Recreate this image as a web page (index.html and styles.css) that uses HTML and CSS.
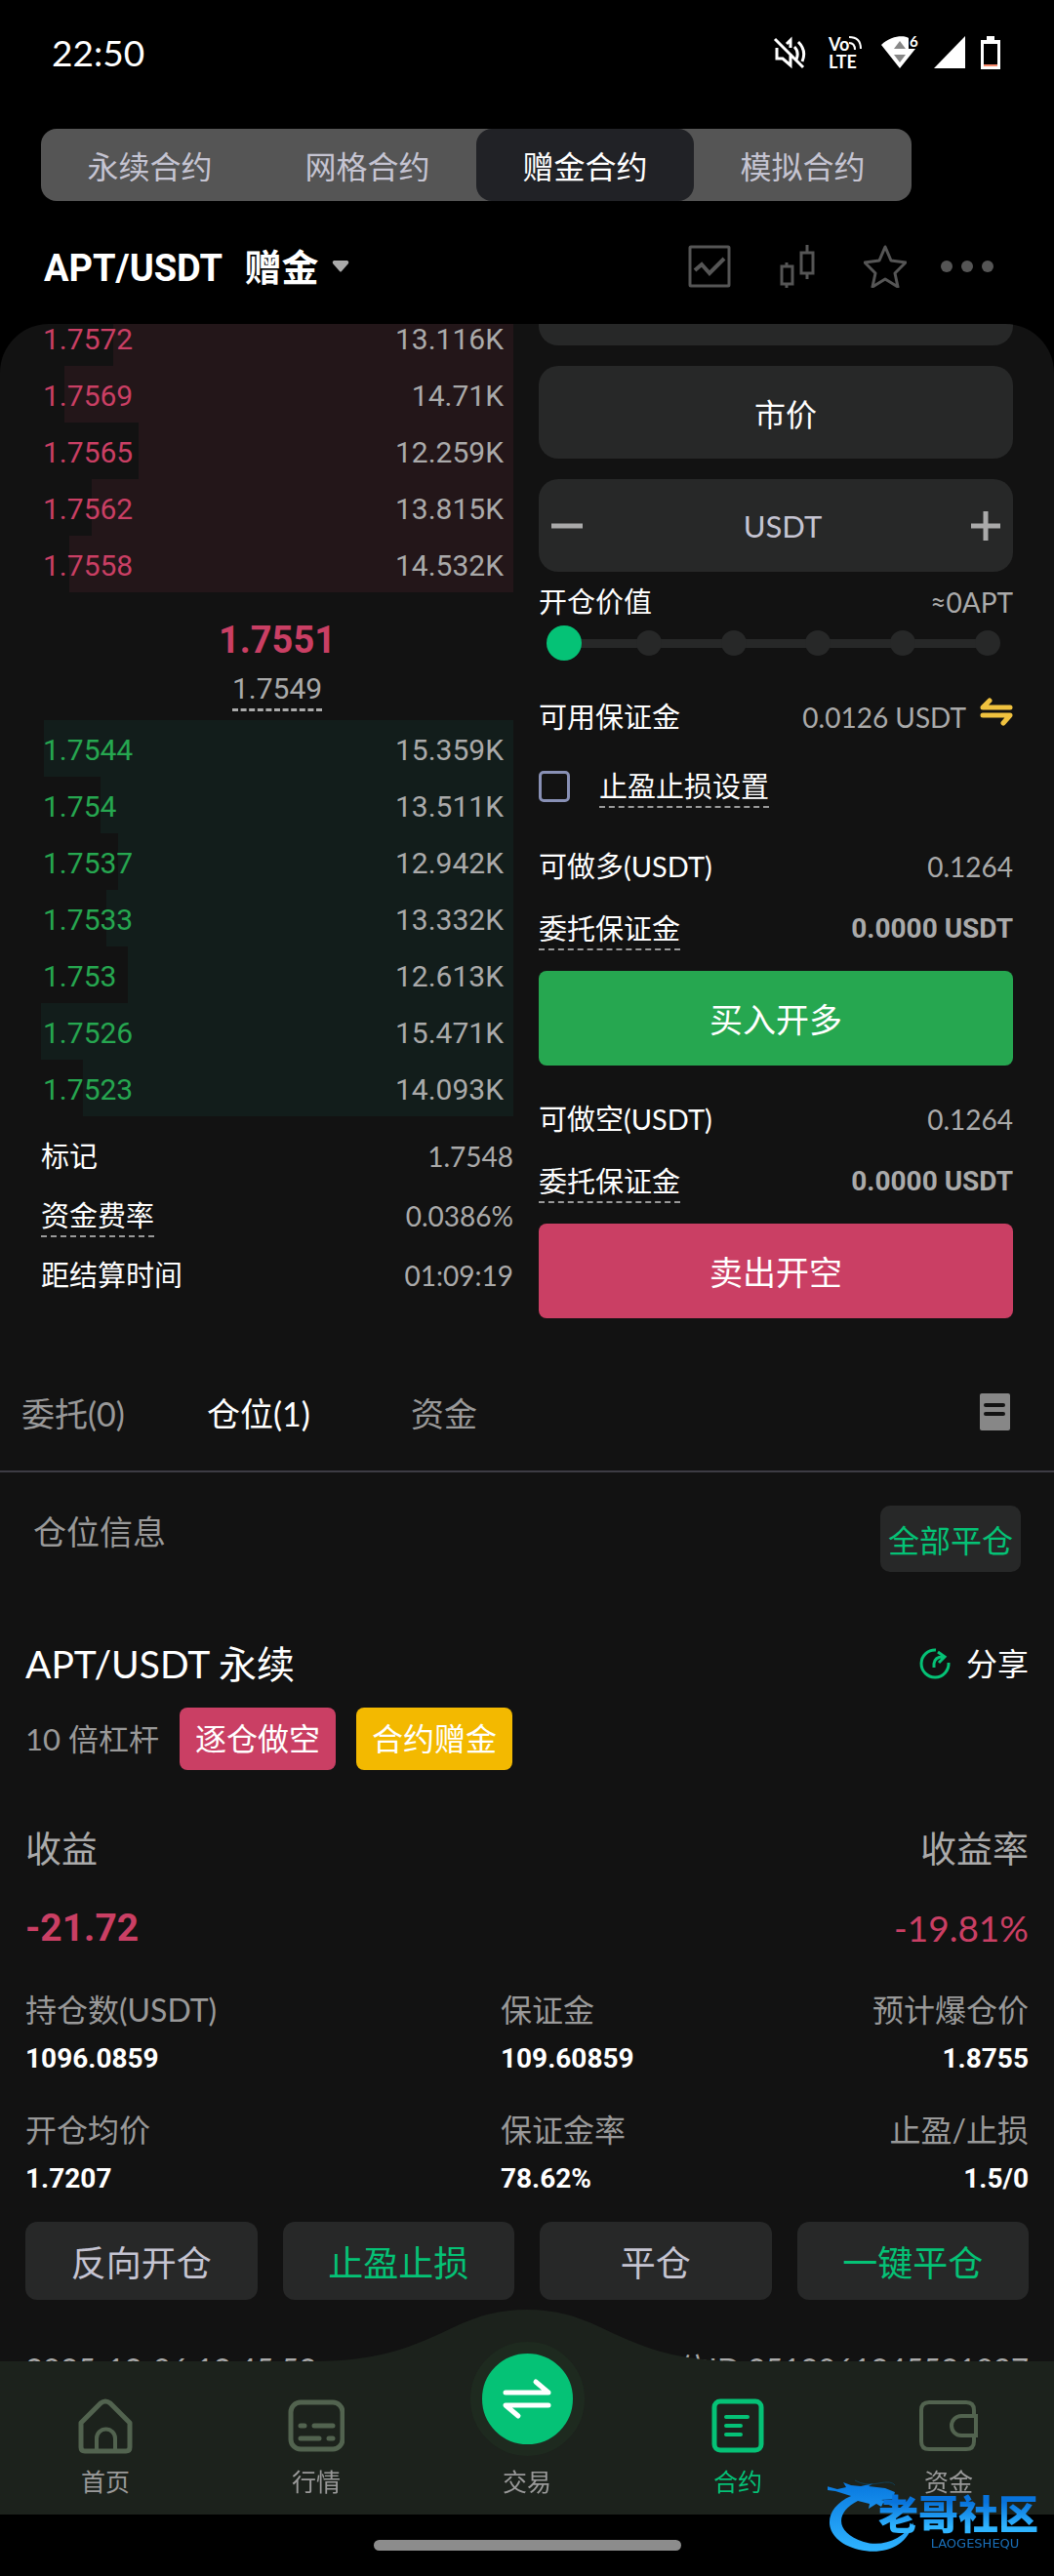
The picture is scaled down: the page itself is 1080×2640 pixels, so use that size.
FILE: index.html
```html
<!DOCTYPE html>
<html lang="zh-CN">
<head>
    <meta charset="UTF-8">
    <meta name="viewport" content="width=device-width, initial-scale=1.0">
    <title>APT/USDT 赠金合约</title>
    <link rel="stylesheet" href="styles.css">
</head>
<body>
    <div class="status-bar">
        <span class="time">22:50</span>
        <div class="status-icons">
            <svg width="34" height="34" viewBox="0 0 34 34" fill="none" stroke="#fff" stroke-width="3">
                <path d="M4 12v11h6l8 7V18M14 8l4-4v8M2 3l29 29M22 11c3 3 4 8 2 13M26 6c6 6 7 13 4 20"/>
            </svg>
            <div class="volte">
                <span class="volte-top">Vo<svg width="14" height="15" viewBox="0 0 14 15" fill="none" stroke="#fff" stroke-width="2"><path d="M0 8c4 0 6 2 6 7M0 2c8 0 12 4 12 12"/></svg></span>
                <span>LTE</span>
            </div>
            <svg class="wifi" width="38" height="34" viewBox="0 0 38 34">
                <path d="M0 9C10-1 24-1 28 2v11h7L19 33z" fill="#fff"/>
                <path d="M19 5l6 8H13zM19 27l6-8H13z" fill="#888"/>
                <text x="29" y="11">6</text>
            </svg>
            <svg width="32" height="34" viewBox="0 0 32 34"><path d="M32 0v33H0z" fill="#fff"/></svg>
            <svg width="20" height="34" viewBox="0 0 20 34">
                <path d="M6 0h8v4h6v30H0V4h6z" fill="#fff"/>
                <path d="M3 8h14v21H3z" fill="#000"/>
                <path d="M3 29h14v2H3z" fill="#f98b6c"/>
            </svg>
        </div>
    </div>

    <nav class="contract-tabs">
        <button type="button">永续合约</button>
        <button type="button">网格合约</button>
        <button type="button" class="active">赠金合约</button>
        <button type="button">模拟合约</button>
    </nav>

    <header class="pair-header">
        <h1>APT/USDT <span>赠金</span></h1>
        <svg class="caret" width="18" height="12" viewBox="0 0 18 12"><path d="M2 0h14q2 1 1 3l-7 8q-1 1-2 0L1 3Q0 1 2 0z" fill="#aaa"/></svg>
        <div class="pair-icons">
            <svg width="44" height="44" viewBox="0 0 44 44" fill="none" stroke="#555" stroke-width="3">
                <rect x="2" y="2" width="40" height="40" rx="1"/>
                <path d="M7 26l7-6 8 9 15-15" stroke-width="4"/>
            </svg>
            <svg width="36" height="44" viewBox="0 0 36 44" fill="none" stroke="#555" stroke-width="3">
                <rect x="2" y="22" width="11" height="18"/>
                <rect x="22" y="8" width="12" height="21"/>
                <path d="M7 18v4M7 40v4M28 0v8M28 29v6"/>
            </svg>
            <svg width="44" height="44" viewBox="0 0 44 44" fill="none" stroke="#555" stroke-width="3" stroke-linejoin="round">
                <path d="M22 2l6 14 15 2-11 11 3 14-13-8-13 8 3-14L1 18l15-2z"/>
            </svg>
            <svg width="54" height="44" viewBox="0 0 54 44" fill="#555">
                <circle cx="6" cy="22" r="6"/><circle cx="27" cy="22" r="6"/><circle cx="48" cy="22" r="6"/>
            </svg>
        </div>
    </header>

    <main class="panel">
        <div class="trade">
            <section class="book">
                <table class="asks">
                    <tr style="--depth: 84.7%"><td>1.7572</td><td>13.116K</td></tr>
                    <tr style="--depth: 95.1%"><td>1.7569</td><td>14.71K</td></tr>
                    <tr style="--depth: 79.3%"><td>1.7565</td><td>12.259K</td></tr>
                    <tr style="--depth: 89.3%"><td>1.7562</td><td>13.815K</td></tr>
                    <tr style="--depth: 94%"><td>1.7558</td><td>14.532K</td></tr>
                </table>
                <div class="last-price">
                    <strong>1.7551</strong>
                    <span>1.7549</span>
                </div>
                <table class="bids">
                    <tr style="--depth: 99.3%"><td>1.7544</td><td>15.359K</td></tr>
                    <tr style="--depth: 87.4%"><td>1.754</td><td>13.511K</td></tr>
                    <tr style="--depth: 83.7%"><td>1.7537</td><td>12.942K</td></tr>
                    <tr style="--depth: 86.2%"><td>1.7533</td><td>13.332K</td></tr>
                    <tr style="--depth: 81.6%"><td>1.753</td><td>12.613K</td></tr>
                    <tr style="--depth: 100%"><td>1.7526</td><td>15.471K</td></tr>
                    <tr style="--depth: 91.1%"><td>1.7523</td><td>14.093K</td></tr>
                </table>
                <div class="book-info">
                    <div class="line"><span>标记</span><span class="value">1.7548</span></div>
                    <div class="line"><span class="dashed">资金费率</span><span class="value">0.0386%</span></div>
                    <div class="line"><span>距结算时间</span><span class="value">01:09:19</span></div>
                </div>
            </section>

            <form class="order">
                <div class="field field-cut"></div>
                <button type="button" class="field price-type">市价</button>
                <div class="field stepper">
                    <button type="button" aria-label="减少">
                        <svg width="32" height="30" viewBox="0 0 32 30"><path d="M0 15h32" stroke="#aaa" stroke-width="5"/></svg>
                    </button>
                    <input type="text" placeholder="USDT" aria-label="数量">
                    <button type="button" aria-label="增加">
                        <svg width="30" height="30" viewBox="0 0 30 30"><path d="M0 15h30M15 0v30" stroke="#aaa" stroke-width="5"/></svg>
                    </button>
                </div>
                <div class="line open-value"><label for="amount">开仓价值</label><span class="value">≈0APT</span></div>
                <div class="slider">
                    <div class="ticks"><i></i><i></i><i></i><i></i><i></i><i></i></div>
                    <input type="range" id="amount" min="0" max="100" value="0">
                </div>
                <div class="line available">
                    <span>可用保证金</span>
                    <span class="value">0.0126 USDT</span>
                    <svg width="34" height="30" viewBox="0 0 34 30" fill="none" stroke="#f0c23f" stroke-width="5" stroke-linecap="round" stroke-linejoin="round">
                        <path d="M31 10H3l7-7M3 18h28l-7 8"/>
                    </svg>
                </div>
                <div class="line tpsl">
                    <input type="checkbox" id="tpsl">
                    <label for="tpsl" class="dashed">止盈止损设置</label>
                </div>
                <div class="line max-long"><span>可做多(USDT)</span><span class="value">0.1264</span></div>
                <div class="line margin-cost"><span class="dashed">委托保证金</span><strong>0.0000 USDT</strong></div>
                <button type="button" class="submit buy">买入开多</button>
                <div class="line max-short"><span>可做空(USDT)</span><span class="value">0.1264</span></div>
                <div class="line margin-cost"><span class="dashed">委托保证金</span><strong>0.0000 USDT</strong></div>
                <button type="button" class="submit sell">卖出开空</button>
            </form>
        </div>

        <div class="list-tabs">
            <button type="button">委托(0)</button>
            <button type="button" class="active">仓位(1)</button>
            <button type="button">资金</button>
            <svg width="31" height="38" viewBox="0 0 31 38">
                <rect width="31" height="38" rx="2" fill="#878787"/>
                <path d="M6 12h18M6 21h18" stroke="#121212" stroke-width="4" stroke-linecap="round"/>
            </svg>
        </div>

        <div class="list-head">
            <h2>仓位信息</h2>
            <button type="button">全部平仓</button>
        </div>

        <article class="position">
            <div class="position-title">
                <h3>APT/USDT 永续</h3>
                <a href="#share">
                    <svg width="32" height="32" viewBox="0 0 32 32" fill="none" stroke="#05c276" stroke-width="3">
                        <path d="M17 2A14 14 0 1 0 30 15M15 20v-4q1-7 9-7M19 4l7 5-6 6"/>
                    </svg>
                    分享
                </a>
            </div>
            <div class="tags">
                <span class="leverage">10 倍杠杆</span>
                <span class="tag short">逐仓做空</span>
                <span class="tag bonus">合约赠金</span>
            </div>
            <div class="profit-labels"><span>收益</span><span>收益率</span></div>
            <div class="profit"><strong>-21.72</strong><span>-19.81%</span></div>
            <dl class="stats">
                <div><dt>持仓数(USDT)</dt><dd>1096.0859</dd></div>
                <div><dt>保证金</dt><dd>109.60859</dd></div>
                <div><dt>预计爆仓价</dt><dd>1.8755</dd></div>
                <div><dt>开仓均价</dt><dd>1.7207</dd></div>
                <div><dt>保证金率</dt><dd>78.62%</dd></div>
                <div><dt>止盈/止损</dt><dd>1.5/0</dd></div>
            </dl>
            <div class="actions">
                <button type="button">反向开仓</button>
                <button type="button" class="green">止盈止损</button>
                <button type="button">平仓</button>
                <button type="button" class="green">一键平仓</button>
            </div>
            <div class="position-foot"><span>2025-12-06 12:45:52</span><span>仓位ID:2512061245521097</span></div>
        </article>
    </main>

    <footer class="bottom">
        <svg class="bump" width="440" height="54" viewBox="0 0 440 54"><path d="M0 54V53C70 53 105 37 145 18C170 6 192 0 220 0S270 6 295 18C335 37 370 53 440 53V54z" fill="#1c221c"/></svg>
        <nav class="bottom-nav">
            <a href="#home">
                <svg width="58" height="58" viewBox="0 0 58 58" fill="none" stroke="#52634f" stroke-width="5">
                    <path d="M4 26L24 6q5-4 10 0l20 20v25q0 4-4 4H8q-4 0-4-4z" stroke-linejoin="round"/>
                    <path d="M20 54V42a9 9 0 0 1 19 0v12" stroke-width="4"/>
                </svg>
                首页
            </a>
            <a href="#market">
                <svg width="58" height="58" viewBox="0 0 58 58" fill="none" stroke="#52634f" stroke-width="5" stroke-linecap="round">
                    <rect x="3" y="5" width="53" height="48" rx="10"/>
                    <path d="M13 29h4M27 29h19M13 42h19M42 42h4"/>
                </svg>
                行情
            </a>
            <a href="#trade">
                <span class="trade-btn">
                    <svg width="50" height="44" viewBox="0 0 50 44" fill="none" stroke="#fff" stroke-width="5" stroke-linecap="round" stroke-linejoin="round">
                        <path d="M3 15h44L34 4M47 28H3l13 11"/>
                    </svg>
                </span>
                交易
            </a>
            <a href="#contract" class="active">
                <svg width="58" height="58" viewBox="0 0 58 58" fill="none" stroke="#05c276" stroke-width="5" stroke-linecap="round">
                    <rect x="5" y="4" width="48" height="50" rx="6"/>
                    <path d="M17 20h22M17 29h15M17 38h15" stroke-width="4"/>
                </svg>
                合约
            </a>
            <a href="#assets">
                <svg width="62" height="58" viewBox="0 0 62 58" fill="none" stroke="#52634f" stroke-width="4">
                    <path d="M57 20V13q0-8-8-8H11q-8 0-8 8v32q0 8 8 8h38q8 0 8-8V38"/>
                    <path d="M59 19H44a9 9 0 0 0 0 20h15z"/>
                </svg>
                资金
            </a>
        </nav>
        <div class="home-bar"><span></span></div>
        <div class="community">
            <svg width="92" height="76" viewBox="0 0 92 76">
                <defs>
                    <linearGradient id="dragon" x1="0" y1="0" x2="0" y2="1">
                        <stop offset="0" stop-color="#0878e0"/>
                        <stop offset="1" stop-color="#2fb4ff"/>
                    </linearGradient>
                </defs>
                <path d="M24 18C-8 32-5 64 32 73c25 6 50-3 56-28-10 17-32 26-51 20C8 56 7 35 31 23l12 3-1 5 8-5 5 3 2-4 11 4-4-5-9-2 12-1 2-7-10-4-17-2 5-3-13 3-10-1-8-3 3 5-9 2-15-4 5 5 8 1z" fill="url(#dragon)"/>
                <path d="M28 2q10 6 24 3t17 2" fill="none" stroke="#123e52" stroke-width="1"/>
            </svg>
            <div class="community-text">
                <b>老哥社区</b>
                <small>LAOGESHEQU</small>
            </div>
        </div>
    </footer>
</body>
</html>
```
FILE: styles.css
```css
* {
    box-sizing: border-box;
}

body {
    margin: 0;
    min-height: 100vh;
    background-color: #000;
    color: #fff;
    font-family: Lato, 'Noto Sans CJK SC', sans-serif;
    font-size: 29px;
    line-height: 40px;
}

button, input {
    font-family: inherit;
    color: inherit;
    border: none;
    padding: 0;
    margin: 0;
    background: none;
}

a {
    color: inherit;
    text-decoration: none;
}

h1, h2, h3, dl, dd {
    margin: 0;
    font-weight: normal;
}

svg {
    flex: none;
}

.status-bar {
    display: flex;
    justify-content: space-between;
    align-items: center;
    height: 108px;
    padding: 0 53px;
}

.time {
    font-size: 37px;
}

.status-icons {
    display: flex;
    align-items: center;
    gap: 16px;
    padding-right: 2px;
}

.volte {
    display: flex;
    flex-direction: column;
    width: 36px;
    margin: 0 2px 0 7px;
    font-size: 18px;
    font-weight: bold;
    line-height: 18px;
}

.volte-top {
    display: flex;
}

.wifi {
    overflow: visible;
}

.wifi text {
    fill: #fff;
    font-size: 15px;
    font-weight: bold;
}

.contract-tabs {
    display: grid;
    grid-template-columns: repeat(4, 1fr);
    margin: 24px 146px 0 42px;
    background-color: #555;
    border-radius: 16px;
}

.contract-tabs button {
    height: 74px;
    font-size: 32px;
    color: #c5c4d2;
    border-radius: 16px;
}

.contract-tabs .active {
    background-color: #212226;
    color: #fff;
}

.pair-header {
    display: flex;
    align-items: center;
    height: 126px;
    padding: 8px 62px 0 45px;
}

.pair-header h1 {
    padding-top: 4px;
    font-family: Roboto, 'Noto Sans CJK SC', sans-serif;
    font-size: 38px;
    font-weight: bold;
}

.pair-header h1 span {
    margin-left: 14px;
}

.caret {
    margin-left: 13px;
}

.pair-icons {
    display: flex;
    gap: 50px;
    margin-left: auto;
}

.pair-icons svg:last-child {
    margin-left: -15px;
}

.panel {
    overflow: hidden;
    background-color: #121212;
    border-radius: 50px 50px 0 0;
}

.trade {
    display: grid;
    grid-template-columns: 1fr 1fr;
    gap: 26px;
    margin-top: -15px;
    padding: 0 42px;
}

/* order book */
.book table {
    width: 100%;
    border-collapse: collapse;
    font-family: Roboto, sans-serif;
    font-size: 30px;
}

.book tr {
    height: 58px;
    background: linear-gradient(to left, var(--bar) var(--depth), transparent 0);
}

.book td {
    padding: 4px 10px 0 2px;
}

.book td:last-child {
    text-align: right;
    color: #aaa;
}

.asks {
    --bar: #231619;
    color: #ca3f64;
}

.bids {
    --bar: #121d1b;
    color: #26a750;
}

.last-price {
    display: flex;
    flex-direction: column;
    align-items: center;
    gap: 5px;
    height: 131px;
    padding-top: 24px;
    font-family: Roboto, sans-serif;
    font-size: 30px;
}

.last-price strong {
    font-size: 38px;
    line-height: 50px;
    color: #ca3f64;
}

.last-price span {
    color: #aaa;
    border-bottom: 3px dashed #aaa;
}

.book-info {
    display: flex;
    flex-direction: column;
    gap: 21px;
    padding-top: 21px;
}

.line {
    display: flex;
    justify-content: space-between;
    align-items: flex-start;
    height: 40px;
}

.value {
    font-size: 28px;
    color: #aaa;
}

.line strong {
    font-family: Roboto, sans-serif;
    font-size: 28px;
    color: #aaa;
}

.dashed {
    border-bottom: 2px dashed #999;
}

/* order form */
.order {
    display: flex;
    flex-direction: column;
}

.field {
    height: 95px;
    margin-bottom: 21px;
    background-color: #272828;
    border-radius: 20px;
}

.field-cut {
    margin-top: -58px;
}

.price-type {
    padding-left: 20px;
    font-size: 32px;
}

.stepper {
    display: flex;
    align-items: center;
    justify-content: space-between;
    margin-bottom: 11px;
    padding: 0 13px;
}

.stepper button {
    display: flex;
}

.stepper input {
    flex: 1;
    min-width: 0;
    padding-left: 12px;
    font-size: 31px;
    text-align: center;
}

.stepper input::placeholder {
    color: #c5c4d2;
}

.slider {
    position: relative;
    height: 36px;
    margin: 4px 8px 38px;
}

.ticks {
    display: flex;
    justify-content: space-between;
    align-items: center;
    height: 36px;
    padding: 0 5px;
    background: linear-gradient(#272828, #272828) center / 92% 9px no-repeat;
}

.ticks i {
    width: 26px;
    height: 26px;
    background-color: #272828;
    border-radius: 50%;
}

.slider input {
    position: absolute;
    inset: 0;
    width: 100%;
    height: 36px;
    appearance: none;
}

.slider input::-webkit-slider-thumb {
    appearance: none;
    width: 36px;
    height: 36px;
    background-color: #05c276;
    border-radius: 50%;
}

.available .value {
    margin: 0 14px 0 auto;
}

.tpsl {
    justify-content: flex-start;
    gap: 30px;
    margin: 31px 0 42px;
}

.tpsl input {
    appearance: none;
    width: 32px;
    height: 32px;
    margin-top: 4px;
    border: 3px solid #8890b5;
    border-radius: 5px;
}

.margin-cost {
    margin: 24px 0 23px;
}

.submit {
    height: 97px;
    font-size: 34px;
    border-radius: 8px;
}

.buy {
    margin-bottom: 35px;
    background-color: #26a750;
}

.sell {
    background-color: #ca3f64;
}

/* positions */
.list-tabs {
    display: flex;
    align-items: center;
    height: 122px;
    margin-top: 36px;
    padding-right: 45px;
    border-bottom: 2px solid #3d3c44;
}

.list-tabs button {
    width: 190px;
    font-size: 34px;
    color: #999;
}

.list-tabs button:first-child {
    margin-left: -20px;
}

.list-tabs .active {
    color: #fff;
}

.list-tabs svg {
    margin-left: auto;
}

.list-head {
    display: flex;
    justify-content: space-between;
    padding: 34px 34px 64px 34px;
}

.list-head h2 {
    font-size: 34px;
    line-height: 54px;
    color: #999;
}

.list-head button {
    width: 144px;
    height: 68px;
    font-size: 32px;
    color: #05c276;
    background-color: #272828;
    border-radius: 10px;
}

.position {
    padding: 0 26px;
}

.position-title {
    display: flex;
    justify-content: space-between;
    align-items: center;
    height: 60px;
}

.position-title h3 {
    font-size: 39px;
}

.position-title a {
    display: flex;
    align-items: center;
    gap: 16px;
    font-size: 32px;
}

.tags {
    display: flex;
    align-items: center;
    gap: 21px;
    margin-top: 15px;
    font-size: 32px;
    color: #999;
}

.leverage {
    font-size: 31px;
}

.tag {
    padding: 12px 16px;
    color: #fff;
    border-radius: 8px;
}

.short {
    background-color: #ca3f64;
}

.bonus {
    background-color: #f3b900;
}

.profit-labels, .profit, .position-foot {
    display: flex;
    justify-content: space-between;
}

.profit-labels {
    margin-top: 56px;
    font-size: 37px;
    line-height: 50px;
    color: #aaa;
}

.profit {
    margin-top: 31px;
    font-size: 37px;
    line-height: 50px;
    color: #ca3f64;
}

.profit strong {
    font-family: Roboto, sans-serif;
    font-size: 39px;
}

.stats {
    display: grid;
    grid-template-columns: 9fr 5fr 5fr;
    row-gap: 33px;
    margin-top: 39px;
}

.stats div:nth-child(3n) {
    text-align: right;
}

.stats dt {
    font-size: 32px;
    color: #999;
}

.stats dd {
    margin-top: 10px;
    font-family: Roboto, sans-serif;
    font-size: 28px;
    font-weight: bold;
}

.actions {
    display: grid;
    grid-template-columns: repeat(4, 1fr);
    gap: 26px;
    margin-top: 24px;
}

.actions button {
    height: 80px;
    font-size: 36px;
    color: #c5c4d2;
    background-color: #272828;
    border-radius: 12px;
}

.actions .green {
    color: #05c276;
}

.position-foot {
    margin-top: 50px;
    padding-bottom: 180px;
    font-size: 31px;
    color: #aaa;
}

/* bottom navigation */
.bottom {
    position: fixed;
    right: 0;
    bottom: 0;
    left: 0;
    background-color: #000;
}

.bump {
    position: absolute;
    bottom: 219px;
    left: 50%;
    margin-left: -220px;
}

.bottom-nav {
    position: relative;
    display: grid;
    grid-template-columns: repeat(5, 1fr);
    grid-template-rows: 157px;
    background-color: #1c221c;
}

.bottom-nav a {
    display: flex;
    flex-direction: column;
    align-items: center;
    justify-content: flex-end;
    gap: 8px;
    padding-bottom: 14px;
    font-size: 25px;
    color: #999;
}

.bottom-nav .active {
    color: #05c276;
}

.trade-btn {
    display: flex;
    flex: none;
    align-items: center;
    justify-content: center;
    width: 117px;
    height: 117px;
    margin-bottom: -2px;
    background-color: #05c276;
    border: 12px solid #1e2a1f;
    border-radius: 50%;
}

.home-bar {
    display: flex;
    justify-content: center;
    align-items: center;
    height: 63px;
}

.home-bar span {
    width: 315px;
    height: 11px;
    background-color: #8c8c8c;
    border-radius: 6px;
}

/* community badge lies over the navigation */
.community {
    position: absolute;
    right: 16px;
    bottom: 24px;
    display: flex;
    align-items: flex-end;
}

.community-text {
    display: flex;
    flex-direction: column;
    align-items: center;
    margin-left: -40px;
}

.community b {
    font-size: 41px;
    font-weight: 900;
    line-height: 42px;
    color: transparent;
    background: linear-gradient(#0873dc 20%, #2fb4ff 80%);
    background-clip: text;
}

.community small {
    margin-left: 34px;
    font-family: 'DejaVu Sans', sans-serif;
    font-size: 13px;
    line-height: 18px;
    color: #1a6fb8;
}
```
